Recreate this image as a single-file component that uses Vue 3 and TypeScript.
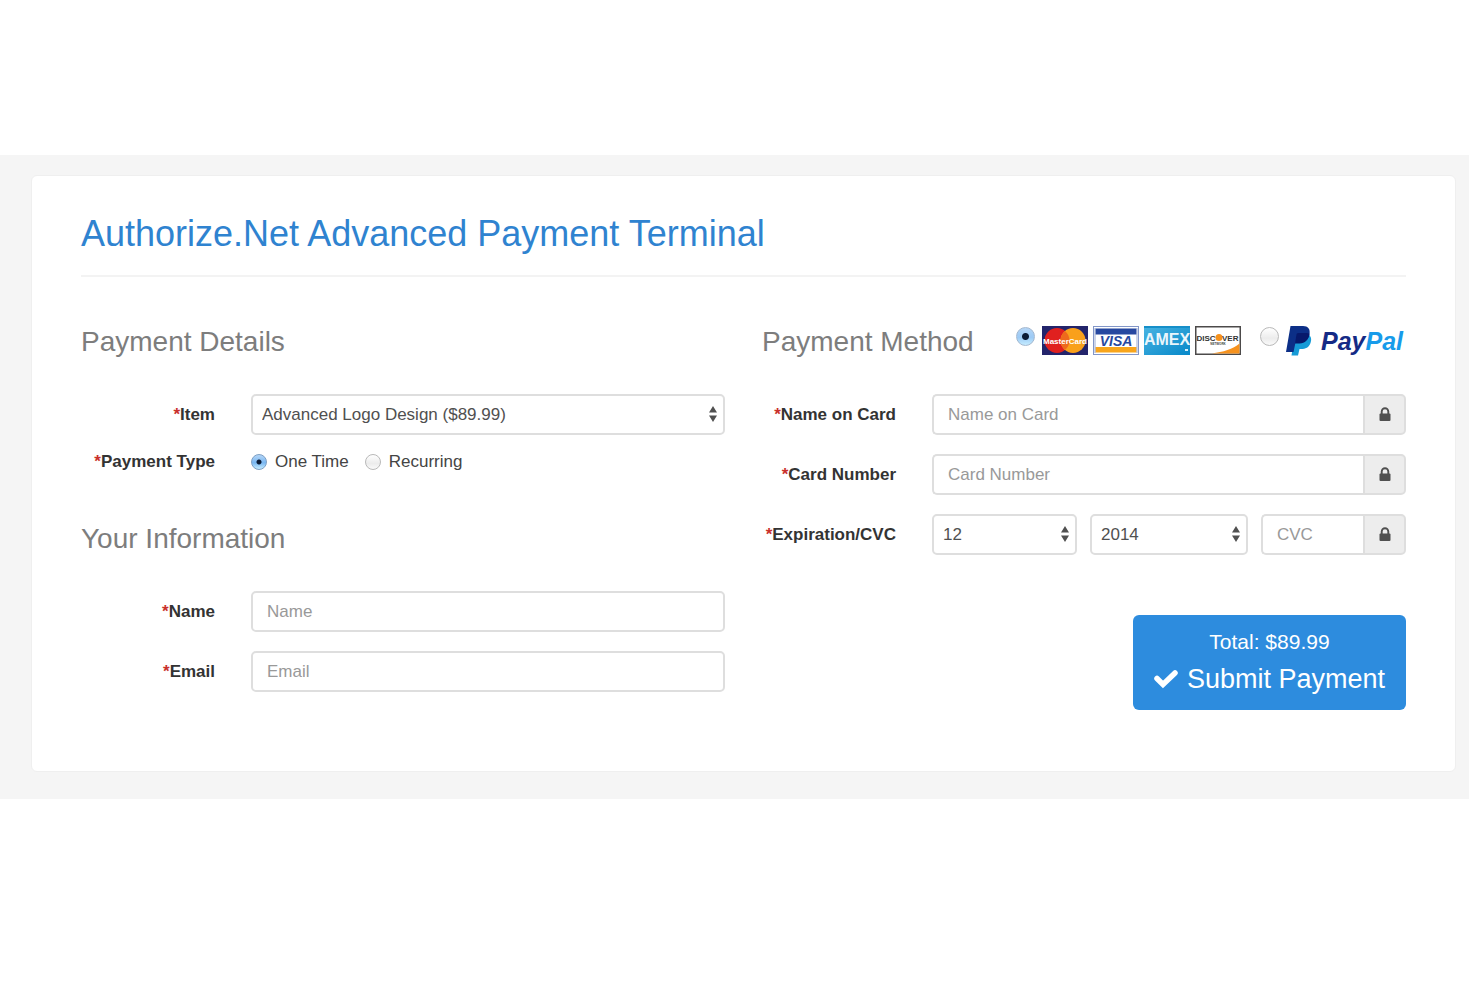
<script setup lang="ts">
import { ref } from 'vue'

const item = ref('logo')
const paymentType = ref('once')
const method = ref('card')
const month = ref('12')
const year = ref('2014')
const name = ref('')
const email = ref('')
const cardName = ref('')
const cardNumber = ref('')
const cvc = ref('')
</script>

<template>
  <main class="band">
    <form class="panel" @submit.prevent>
      <h1>Authorize.Net Advanced Payment Terminal</h1>
      <div class="columns">
        <div class="column">
          <section>
            <header class="head"><h2>Payment Details</h2></header>
            <div class="row">
              <label class="caption" for="item"><span class="star">*</span>Item</label>
              <div class="select">
                <select id="item" v-model="item">
                  <option value="logo">Advanced Logo Design ($89.99)</option>
                </select>
                <svg class="arrows" viewBox="0 0 8 16" aria-hidden="true"><path d="M4 0 8 6.500H0zM0 9.500h8L4 16z" /></svg>
              </div>
            </div>
            <div class="row choice-row" role="radiogroup" aria-labelledby="type-caption">
              <span id="type-caption" class="caption"><span class="star">*</span>Payment Type</span>
              <div class="choices">
                <label class="choice"><input v-model="paymentType" type="radio" name="type" value="once" />One Time</label>
                <label class="choice"><input v-model="paymentType" type="radio" name="type" value="recurring" />Recurring</label>
              </div>
            </div>
          </section>
          <section class="info">
            <header class="head"><h2>Your Information</h2></header>
            <div class="row">
              <label class="caption" for="name"><span class="star">*</span>Name</label>
              <input id="name" v-model="name" class="field" type="text" placeholder="Name" />
            </div>
            <div class="row">
              <label class="caption" for="email"><span class="star">*</span>Email</label>
              <input id="email" v-model="email" class="field" type="email" placeholder="Email" />
            </div>
          </section>
        </div>

        <div class="column">
          <section>
            <header class="head">
              <h2>Payment Method</h2>
              <div class="methods">
                <label class="method" aria-label="Credit card">
                  <input v-model="method" type="radio" name="method" value="card" />
                  <span class="brands">
                    <svg class="brand" viewBox="0 0 46 29" role="img" aria-label="MasterCard">
                      <rect width="46" height="29" fill="#23246b" />
                      <circle cx="15" cy="14.500" r="12.500" fill="#e0201f" />
                      <circle cx="31" cy="14.500" r="12.500" fill="#f9a01b" />
                      <path d="M23 4.900a12.500 12.500 0 0 1 0 19.200 12.500 12.500 0 0 1 0-19.200z" fill="#ee6a1c" />
                      <text x="23" y="18" class="mc">MasterCard</text>
                    </svg>
                    <svg class="brand" viewBox="0 0 46 29" role="img" aria-label="Visa">
                      <rect x=".5" y=".5" width="45" height="28" fill="#fff" stroke="#8296c8" />
                      <rect x="2.500" y="2.500" width="41" height="6" fill="#2748a0" />
                      <rect x="2.500" y="21" width="41" height="5.500" fill="#f8a51b" />
                      <path d="M2 2v25M44 2v25" stroke="#8296c8" stroke-width=".8" />
                      <text x="23" y="20" class="visa">VISA</text>
                    </svg>
                    <svg class="brand" viewBox="0 0 46 29" role="img" aria-label="American Express">
                      <defs>
                        <linearGradient id="amex-fill" x1="0" y1="0" x2="1" y2="1">
                          <stop offset="0" stop-color="#49b4e2" />
                          <stop offset="1" stop-color="#0788c9" />
                        </linearGradient>
                      </defs>
                      <rect width="46" height="29" fill="url(#amex-fill)" />
                      <path d="M0 0h46v2H0z" fill="#168fc9" />
                      <text x="23" y="19" class="amex">AMEX</text>
                      <path d="M41 23h3v2h-3z" fill="#d6effa" />
                    </svg>
                    <svg class="brand" viewBox="0 0 46 29" role="img" aria-label="Discover">
                      <rect x=".75" y=".75" width="44.500" height="27.500" fill="#fff" stroke="#4c4a4a" stroke-width="1.500" />
                      <path d="M44.500 17.500v10H17C28 26 38 23 44.500 17.500z" fill="#f6921e" />
                      <circle cx="24" cy="11.500" r="3.500" fill="#f6921e" />
                      <text x="20.500" y="14.500" class="disc disc-start">DISC</text>
                      <text x="27" y="14.500" class="disc">VER</text>
                      <text x="23" y="19" class="network">NETWORK</text>
                    </svg>
                  </span>
                </label>
                <label class="method" aria-label="PayPal">
                  <input v-model="method" type="radio" name="method" value="paypal" />
                  <svg class="paypal" viewBox="0 0 120 32" role="img" aria-label="PayPal">
                    <path d="M9 8h13c3 2 4 5 2.500 9-1.500 4.500-5 6-9.500 6h-1.500L12 29.500H5.500z" fill="#179bd7" />
                    <path d="M4.500 0H17c5 0 7.500 3 6.500 8-1 5.500-4.500 8.500-10 8.500H9.500L7.500 26H0z" fill="#0c2f87" />
                    <path d="M10.500 8.500c.2-1 1-1.500 2-1.500h8c1 0 2 .3 3 .8-.8 6-4.500 9.700-10 9.700H9z" fill="#07196b" />
                    <text x="35" y="24" class="wordmark"><tspan class="pay">Pay</tspan><tspan class="pal">Pal</tspan></text>
                  </svg>
                </label>
              </div>
            </header>
            <div class="row">
              <label class="caption" for="card-name"><span class="star">*</span>Name on Card</label>
              <div class="group">
                <input id="card-name" v-model="cardName" class="field" type="text" placeholder="Name on Card" />
                <span class="addon"><svg class="lock" viewBox="0 0 12 15" aria-hidden="true"><path d="M2.700 7V4.500a3.300 3.300 0 0 1 6.600 0V7" fill="none" stroke="#505050" stroke-width="1.900" /><rect x=".5" y="6.500" width="11" height="7.500" rx="1" fill="#505050" /></svg></span>
              </div>
            </div>
            <div class="row">
              <label class="caption" for="card-number"><span class="star">*</span>Card Number</label>
              <div class="group">
                <input id="card-number" v-model="cardNumber" class="field" type="text" placeholder="Card Number" />
                <span class="addon"><svg class="lock" viewBox="0 0 12 15" aria-hidden="true"><path d="M2.700 7V4.500a3.300 3.300 0 0 1 6.600 0V7" fill="none" stroke="#505050" stroke-width="1.900" /><rect x=".5" y="6.500" width="11" height="7.500" rx="1" fill="#505050" /></svg></span>
              </div>
            </div>
            <div class="row">
              <label class="caption" for="month"><span class="star">*</span>Expiration/CVC</label>
              <div class="expiry">
                <div class="select">
                  <select id="month" v-model="month"><option>12</option></select>
                  <svg class="arrows" viewBox="0 0 8 16" aria-hidden="true"><path d="M4 0 8 6.500H0zM0 9.500h8L4 16z" /></svg>
                </div>
                <div class="select">
                  <select v-model="year" aria-label="Expiration year"><option>2014</option></select>
                  <svg class="arrows" viewBox="0 0 8 16" aria-hidden="true"><path d="M4 0 8 6.500H0zM0 9.500h8L4 16z" /></svg>
                </div>
                <div class="group">
                  <input v-model="cvc" class="field" type="text" placeholder="CVC" aria-label="CVC" />
                  <span class="addon"><svg class="lock" viewBox="0 0 12 15" aria-hidden="true"><path d="M2.700 7V4.500a3.300 3.300 0 0 1 6.600 0V7" fill="none" stroke="#505050" stroke-width="1.900" /><rect x=".5" y="6.500" width="11" height="7.500" rx="1" fill="#505050" /></svg></span>
                </div>
              </div>
            </div>
          </section>
          <button class="submit" type="submit">
            <span class="total">Total: $89.99</span>
            <span class="action">
              <svg class="check" viewBox="0 0 24 20" aria-hidden="true"><path d="M3 9.500 9 15.500 21 4" fill="none" stroke="#fff" stroke-width="5.500" stroke-linecap="round" /></svg>
              Submit Payment
            </span>
          </button>
        </div>
      </div>
    </form>
  </main>
</template>

<style>
body {
  margin: 0;
  background: #fff;
}
</style>

<style scoped>
* {
  box-sizing: border-box;
}
.band {
  margin: 155px 11px 0 0;
  padding: 20px 13px 27px 31px;
  background: #f5f5f5;
  color: #444;
  font: 17px/24px "Liberation Sans", Arial, sans-serif;
}
.panel {
  padding: 36px 49px 61px;
  background: #fff;
  border: 1px solid #efefef;
  border-radius: 6px;
}
h1,
h2 {
  margin: 0;
  font-weight: 400;
}
h1 {
  padding-bottom: 20px;
  border-bottom: 2px solid #f3f3f3;
  color: #2f83d0;
  font-size: 36px;
  line-height: 43px;
}
h2 {
  color: #7d7d7d;
  font-size: 28px;
  line-height: 40px;
  white-space: nowrap;
}
.columns {
  display: grid;
  grid-template-columns: 1fr 1fr;
  gap: 37px;
  padding-top: 45px;
}
.column {
  display: flex;
  flex-direction: column;
  min-width: 0;
}
.info {
  margin-top: 45px;
}
.head {
  display: flex;
  justify-content: space-between;
  margin-bottom: 32px;
}
.row {
  display: grid;
  grid-template-columns: 134px minmax(0, 1fr);
  gap: 36px;
  align-items: center;
}
.row + .row {
  margin-top: 19px;
}
.row + .choice-row {
  margin-top: 15px;
}
.caption {
  color: #333;
  font-weight: 700;
  text-align: right;
  white-space: nowrap;
}
.star {
  color: #c9302c;
}
.field,
select {
  width: 100%;
  height: 41px;
  min-width: 0;
  border: 2px solid #dedede;
  border-radius: 5px;
  background: #fff;
  color: #505050;
  font: inherit;
}
.field {
  padding: 0 14px;
}
.field::placeholder {
  color: #999;
  opacity: 1;
}
select {
  padding: 0 28px 0 9px;
  appearance: none;
}
.select {
  position: relative;
}
.arrows {
  position: absolute;
  top: 12px;
  right: 8px;
  width: 8px;
  height: 16px;
  fill: #505050;
  pointer-events: none;
}
.group {
  display: flex;
  min-width: 0;
}
.group .field {
  flex: 1;
  border-right: 0;
  border-radius: 5px 0 0 5px;
}
.addon {
  display: grid;
  flex: none;
  place-items: center;
  width: 43px;
  border: 2px solid #dedede;
  border-radius: 0 5px 5px 0;
  background: #ededed;
}
.lock {
  width: 12px;
  height: 15px;
}
.expiry {
  display: grid;
  grid-template-columns: 145fr 158fr 145fr;
  gap: 13px;
}
.choices {
  display: flex;
  gap: 16px;
}
.choice {
  display: flex;
  align-items: center;
  gap: 8px;
}
input[type="radio"] {
  flex: none;
  width: 16px;
  height: 16px;
  margin: 0;
  border: 1px solid #b9b9b9;
  border-radius: 50%;
  background: linear-gradient(#fff, #ececec 60%, #fafafa);
  appearance: none;
}
input[type="radio"]:checked {
  border-color: #7d9fc4;
  background:
    radial-gradient(circle, #0c1c36 0 2px, transparent 3px),
    linear-gradient(#b5d6f7, #79b7f2 55%, #c5ecff);
}
.methods {
  display: flex;
  align-items: flex-start;
  gap: 19px;
  padding-top: 4px;
}
.method {
  display: flex;
  gap: 7px;
}
.method input[type="radio"] {
  width: 19px;
  height: 19px;
  margin-top: 1px;
}
.method input[type="radio"]:checked {
  border-color: #a3b8d0;
  background:
    radial-gradient(circle, #0c1c36 0 3px, transparent 4px),
    linear-gradient(#b5d6f7, #9ccaf5 55%, #c5ecff);
}
.brands {
  display: flex;
  gap: 5px;
}
.brand {
  width: 46px;
  height: 29px;
}
.paypal {
  width: 120px;
  height: 32px;
  overflow: visible;
}
.mc,
.visa,
.amex,
.network {
  font-family: "Liberation Sans", Arial, sans-serif;
  font-weight: 700;
  text-anchor: middle;
}
.mc {
  fill: #fff;
  font-size: 8px;
}
.visa {
  fill: #2748a0;
  font-size: 14px;
  font-style: italic;
}
.amex {
  fill: #e9f6fc;
  font-size: 16px;
}
.disc {
  fill: #333;
  font: 700 8px "Liberation Sans", Arial, sans-serif;
}
.disc-start {
  text-anchor: end;
}
.network {
  fill: #444;
  font-size: 3px;
}
.wordmark {
  font: italic 700 25px "Liberation Sans", Arial, sans-serif;
}
.pay {
  fill: #152a85;
}
.pal {
  fill: #179bea;
}
.submit {
  align-self: flex-end;
  margin-top: 60px;
  padding: 9px 21px 12px;
  border: 0;
  border-radius: 6px;
  background: #2d8cde;
  color: #fff;
  font-family: inherit;
}
.total {
  display: block;
  font-size: 21px;
  line-height: 36px;
}
.action {
  display: flex;
  align-items: center;
  gap: 9px;
  font-size: 27px;
  line-height: 38px;
}
.check {
  width: 24px;
  height: 20px;
}
</style>
